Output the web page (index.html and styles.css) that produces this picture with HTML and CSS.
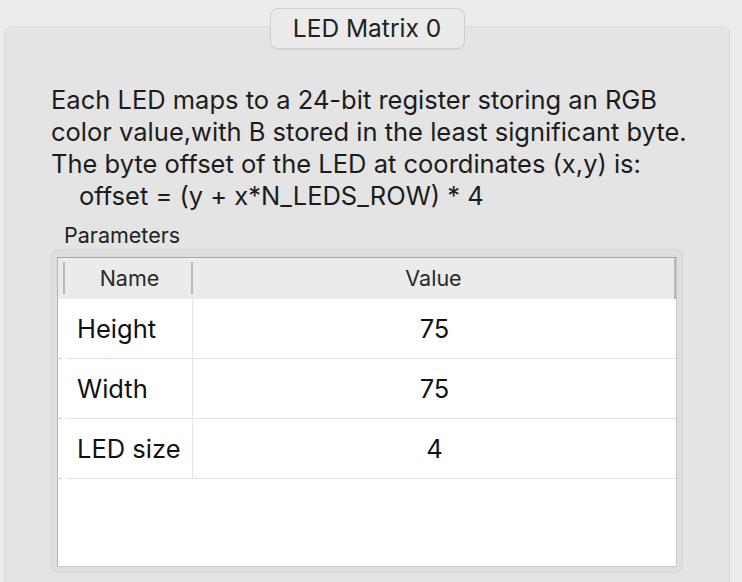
FILE: index.html
```html
<!DOCTYPE html>
<html>
<head>
<meta charset="utf-8">
<link rel="stylesheet" href="styles.css">
</head>
<body>
<div class="window">
  <div class="title-row"><div class="pill">LED Matrix 0</div></div>
  <div class="group">
    <p class="desc">Each LED maps to a 24-bit register storing an RGB<br>color value,with B stored in the least significant byte.<br>The byte offset of the LED at coordinates (x,y) is:<br><span class="indent">offset = (y + x*N_LEDS_ROW) * 4</span></p>
    <div class="params-label">Parameters</div>
    <div class="frame">
      <div class="table">
        <div class="hrow">
          <div class="corner"></div>
          <div class="hcell name-col">Name</div>
          <div class="hcell">Value</div>
          <div class="hend"></div>
        </div>
        <div class="row"><div class="vh"></div><div class="cell name-col">Height</div><div class="cell value">75</div></div>
        <div class="row"><div class="vh"></div><div class="cell name-col">Width</div><div class="cell value">75</div></div>
        <div class="row"><div class="vh"></div><div class="cell name-col">LED size</div><div class="cell value">4</div></div>
        <div class="filler"></div>
      </div>
    </div>
  </div>
</div>
</body>
</html>
```
FILE: styles.css
```css
html, body {
  margin: 0;
  padding: 0;
}
body {
  background: #ececec;
  width: 742px;
  height: 582px;
  overflow: hidden;
  font-family: "Inter", "Liberation Sans", sans-serif;
  color: #1c1c1c;
}
.window {
  padding-top: 8px;
  height: 574px;
  overflow: hidden;
}
.title-row {
  display: flex;
  justify-content: center;
  width: 734px;
  position: relative;
  z-index: 1;
}
.pill {
  box-sizing: border-box;
  width: 195px;
  height: 41px;
  border: 1px solid #cfcfcf;
  border-radius: 8px;
  background: #ebebeb;
  box-shadow: 0 1px 0 rgba(0,0,0,0.06);
  font-size: 24.5px;
  line-height: 39px;
  text-align: center;
  color: #222;
}
.group {
  box-sizing: border-box;
  margin: -23px 0 0 4px;
  width: 726px;
  height: 556px;
  background: #e4e4e4;
  border: 1px solid #d8d8d8;
  border-top-color: #dcdcdc;
  border-bottom: none;
  border-radius: 8px 8px 0 0;
  padding: 57px 0 0 46px;
}
.desc {
  margin: 0;
  font-size: 25.5px;
  line-height: 32px;
  white-space: nowrap;
}
.indent {
  padding-left: 28px;
}
.params-label {
  margin: 9px 0 0 13px;
  font-size: 21.5px;
  line-height: 28px;
  color: #222;
}
.frame {
  box-sizing: border-box;
  width: 632px;
  height: 324px;
  background: #dedede;
  border: 1px solid #d6d6d6;
  border-radius: 7px;
  padding: 7px 5px 5px 5px;
}
.table {
  height: 100%;
  box-sizing: border-box;
  border-top: 1px solid #a3a3a3;
  border-left: 1px solid #b4b4b4;
  border-right: 1px solid #c8c8c8;
  border-bottom: 1px solid #c8c8c8;
  background: #fff;
  display: flex;
  flex-direction: column;
}
.hrow {
  display: grid;
  grid-template-columns: 8px 127px 1fr 2px;
  height: 41px;
  background: #ebebeb;
  font-size: 21.5px;
  color: #2a2a2a;
}
.corner {
  position: relative;
}
.corner::after, .hcell.name-col::after {
  content: "";
  position: absolute;
  top: 4px;
  bottom: 5px;
  right: 0;
  width: 2px;
  background: #b9b9b9;
}
.corner::after {
  right: 1px;
}
.hcell {
  position: relative;
  text-align: center;
  line-height: 41px;
}
.hend {
  background: #b9b9b9;
}
.row {
  display: grid;
  grid-template-columns: 8px 127px 1fr;
  height: 60px;
  position: relative;
}
.vh {
  position: relative;
}
.vh::after {
  content: "";
  position: absolute;
  left: 1px;
  bottom: 0;
  width: 3px;
  height: 1px;
  background: #c4c4c4;
}
.cell {
  font-size: 25.5px;
  line-height: 59px;
  border-bottom: 1px solid #e2e2e2;
  color: #111;
}
.cell.name-col {
  padding-left: 11px;
  border-right: 1px solid #e6e6e6;
}
.cell.value {
  text-align: center;
}
.filler {
  flex: 1;
}
```
